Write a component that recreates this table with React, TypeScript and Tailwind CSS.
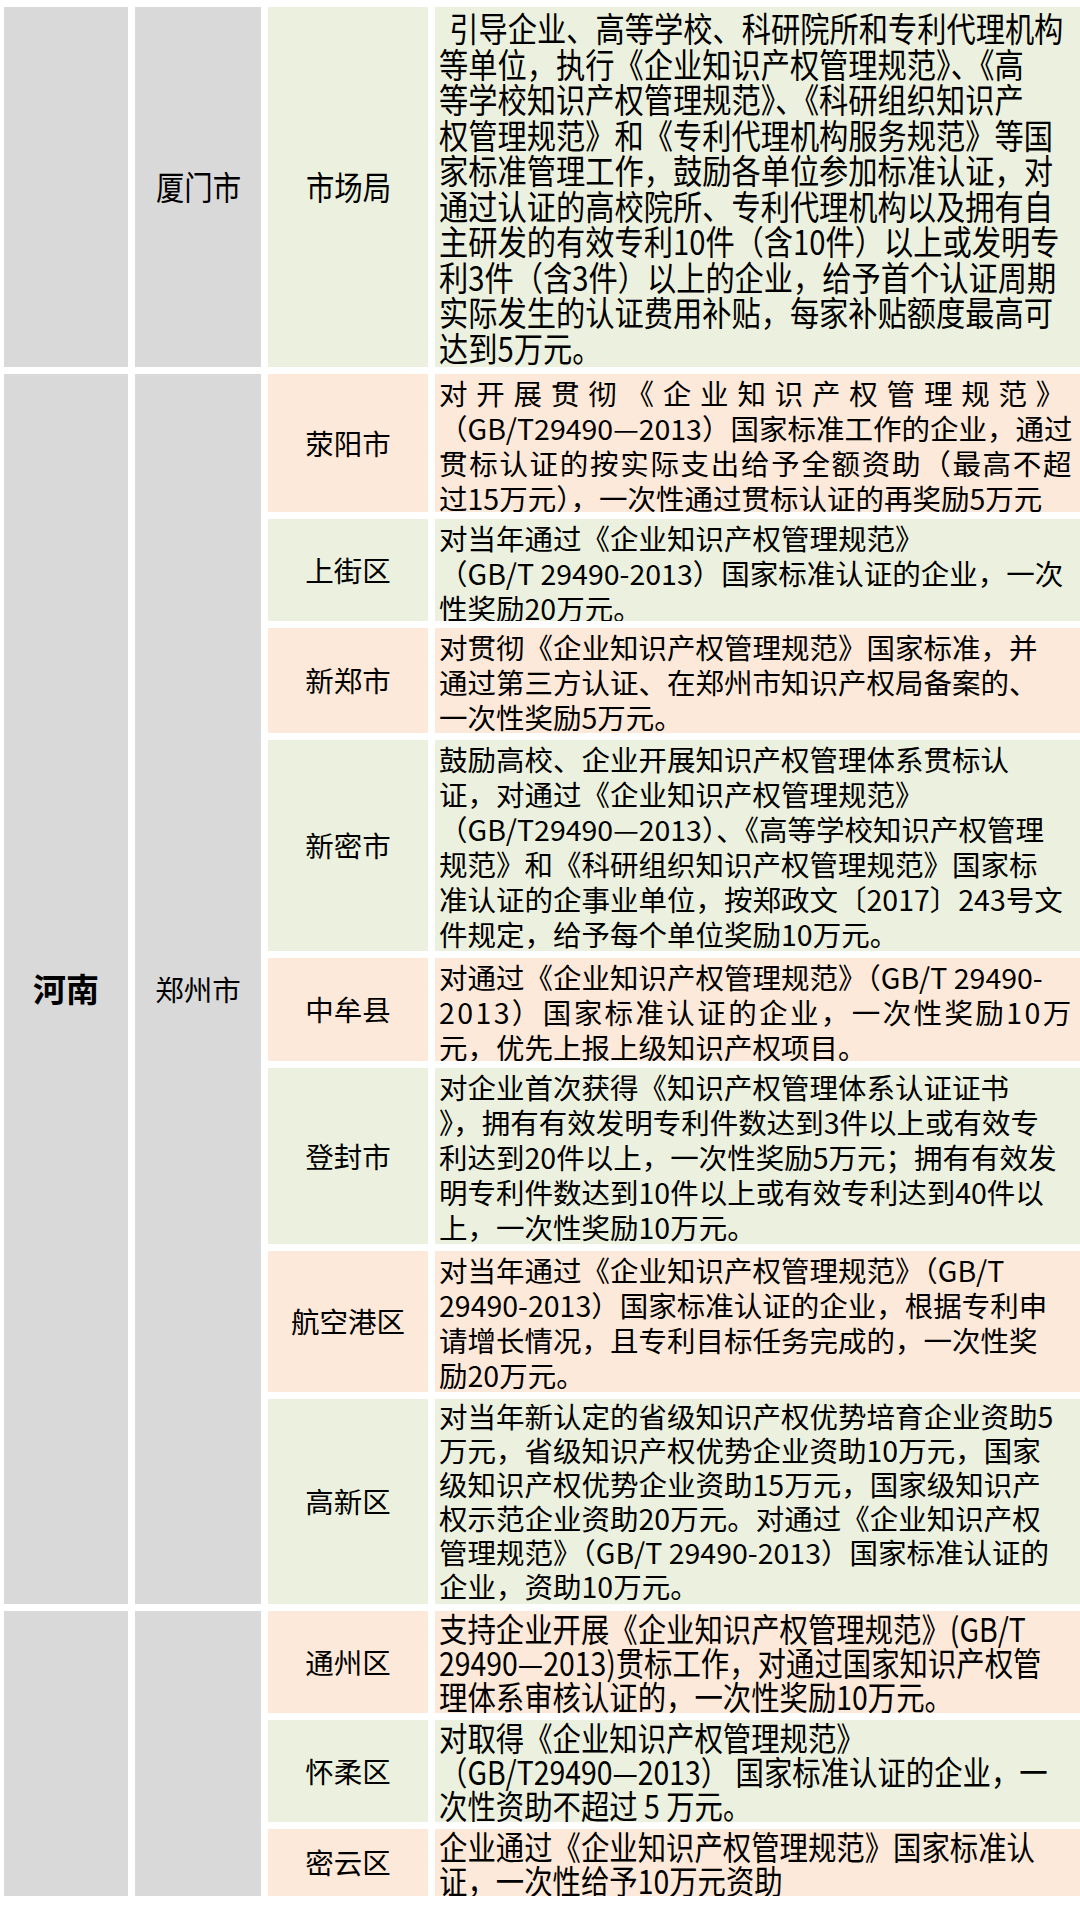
type Line = string | { t: string; c: string };

type Row = {
  label: string;
  bg: "green" | "peach";
  lines: Line[];
  narrow?: boolean;
  tight?: boolean;
};

const henan: Row[] = [
  {
    label: "荥阳市",
    bg: "peach",
    lines: [
      { t: "对开展贯彻《企业知识产权管理规范》", c: "tracking-[8.8px]" },
      "（GB/T29490—2013）国家标准工作的企业，通过",
      { t: "贯标认证的按实际支出给予全额资助（最高不超", c: "tracking-[1.7px]" },
      "过15万元），一次性通过贯标认证的再奖励5万元",
    ],
  },
  {
    label: "上街区",
    bg: "green",
    lines: [
      "对当年通过《企业知识产权管理规范》",
      "（GB/T 29490-2013）国家标准认证的企业，一次",
      "性奖励20万元。",
    ],
  },
  {
    label: "新郑市",
    bg: "peach",
    lines: [
      "对贯彻《企业知识产权管理规范》国家标准，并",
      "通过第三方认证、在郑州市知识产权局备案的、",
      "一次性奖励5万元。",
    ],
  },
  {
    label: "新密市",
    bg: "green",
    lines: [
      "鼓励高校、企业开展知识产权管理体系贯标认",
      "证，对通过《企业知识产权管理规范》",
      "（GB/T29490—2013）、《高等学校知识产权管理",
      "规范》和《科研组织知识产权管理规范》国家标",
      "准认证的企事业单位，按郑政文〔2017〕243号文",
      "件规定，给予每个单位奖励10万元。",
    ],
  },
  {
    label: "中牟县",
    bg: "peach",
    lines: [
      "对通过《企业知识产权管理规范》（GB/T 29490-",
      { t: "2013）国家标准认证的企业，一次性奖励10万", c: "tracking-[2.4px]" },
      "元，优先上报上级知识产权项目。",
    ],
  },
  {
    label: "登封市",
    bg: "green",
    lines: [
      "对企业首次获得《知识产权管理体系认证证书",
      "》，拥有有效发明专利件数达到3件以上或有效专",
      "利达到20件以上，一次性奖励5万元；拥有有效发",
      "明专利件数达到10件以上或有效专利达到40件以",
      "上，一次性奖励10万元。",
    ],
  },
  {
    label: "航空港区",
    bg: "peach",
    lines: [
      "对当年通过《企业知识产权管理规范》（GB/T",
      "29490-2013）国家标准认证的企业，根据专利申",
      "请增长情况，且专利目标任务完成的，一次性奖",
      "励20万元。",
    ],
  },
  {
    label: "高新区",
    bg: "green",
    tight: true,
    lines: [
      "对当年新认定的省级知识产权优势培育企业资助5",
      "万元，省级知识产权优势企业资助10万元，国家",
      "级知识产权优势企业资助15万元，国家级知识产",
      "权示范企业资助20万元。对通过《企业知识产权",
      "管理规范》（GB/T 29490-2013）国家标准认证的",
      "企业，资助10万元。",
    ],
  },
];

const beijing: Row[] = [
  {
    label: "通州区",
    bg: "peach",
    narrow: true,
    lines: [
      "支持企业开展《企业知识产权管理规范》(GB/T",
      "29490—2013)贯标工作，对通过国家知识产权管",
      "理体系审核认证的，一次性奖励10万元。",
    ],
  },
  {
    label: "怀柔区",
    bg: "green",
    narrow: true,
    lines: [
      "对取得《企业知识产权管理规范》",
      "（GB/T29490—2013） 国家标准认证的企业，一",
      "次性资助不超过 5 万元。",
    ],
  },
  {
    label: "密云区",
    bg: "peach",
    narrow: true,
    lines: ["企业通过《企业知识产权管理规范》国家标准认", "证，一次性给予10万元资助"],
  },
];

function Lines({ lines }: { lines: Line[] }) {
  return (
    <>
      {lines.map((l, i) =>
        typeof l === "string" ? (
          <div key={i} className="whitespace-nowrap">
            {l}
          </div>
        ) : (
          <div key={i} className={`whitespace-nowrap ${l.c}`}>
            {l.t}
          </div>
        )
      )}
    </>
  );
}

function Label({ row }: { row: Row }) {
  return (
    <div
      className={`col-start-3 flex items-center justify-center text-[28.5px] text-black ${
        row.bg === "green" ? "bg-[#ebf1de]" : "bg-[#fde9d9]"
      }`}
    >
      {row.label}
    </div>
  );
}

function Body({ row }: { row: Row }) {
  const bg = row.bg === "green" ? "bg-[#ebf1de]" : "bg-[#fde9d9]";
  if (row.narrow) {
    return (
      <div className={`col-start-4 overflow-hidden pl-[4px] ${bg}`}>
        <div className="origin-top-left scale-x-[0.86] text-[33px] leading-[34px] text-black">
          <Lines lines={row.lines} />
        </div>
      </div>
    );
  }
  return (
    <div
      className={`col-start-4 overflow-hidden pl-[4px] text-[28.5px] text-black ${
        row.tight ? "leading-[34px]" : "pt-[1px] leading-[35px]"
      } ${bg}`}
    >
      <Lines lines={row.lines} />
    </div>
  );
}

function TableRow({ row }: { row: Row }) {
  return (
    <>
      <Label row={row} />
      <Body row={row} />
    </>
  );
}

export default function App() {
  return (
    <div className="h-[1907px] w-[1080px] overflow-hidden bg-white pl-[4px] pt-[7px] font-['Noto_Sans_CJK_SC',sans-serif]">
      <div className="grid grid-cols-[124px_126px_160px_645px] grid-rows-[360px_138px_102px_105px_211px_103px_176px_141px_205px_102px_102px_67px] gap-x-[7px] gap-y-[7px]">
        {/* 厦门 */}
        <div className="col-start-1 bg-[#d9d9d9]" />
        <div className="col-start-2 flex items-center justify-center bg-[#d9d9d9]">
          <span className="scale-x-[0.86] text-[33px] text-black">厦门市</span>
        </div>
        <div className="col-start-3 flex items-center justify-center bg-[#ebf1de]">
          <span className="scale-x-[0.86] text-[33px] text-black">市场局</span>
        </div>
        <div className="col-start-4 overflow-hidden bg-[#ebf1de] pl-[4px] pt-[3px]">
          <div className="origin-top-left scale-x-[0.86] text-[34px] leading-[35.5px] text-black">
            <Lines
              lines={[
                { t: "引导企业、高等学校、科研院所和专利代理机构", c: "pl-[12px]" },
                "等单位，执行《企业知识产权管理规范》、《高",
                "等学校知识产权管理规范》、《科研组织知识产",
                "权管理规范》和《专利代理机构服务规范》等国",
                "家标准管理工作，鼓励各单位参加标准认证，对",
                "通过认证的高校院所、专利代理机构以及拥有自",
                "主研发的有效专利10件（含10件）以上或发明专",
                "利3件（含3件）以上的企业，给予首个认证周期",
                "实际发生的认证费用补贴，每家补贴额度最高可",
                "达到5万元。",
              ]}
            />
          </div>
        </div>

        {/* 河南 */}
        <div className="col-start-1 row-span-8 flex items-center justify-center bg-[#d9d9d9] text-[33px] font-bold text-black">
          河南
        </div>
        <div className="col-start-2 row-span-8 flex items-center justify-center bg-[#d9d9d9] text-[28.5px] text-black">
          郑州市
        </div>
        {henan.map((row) => (
          <TableRow key={row.label} row={row} />
        ))}

        {/* 北京 */}
        <div className="col-start-1 row-span-3 bg-[#d9d9d9]" />
        <div className="col-start-2 row-span-3 bg-[#d9d9d9]" />
        {beijing.map((row) => (
          <TableRow key={row.label} row={row} />
        ))}
      </div>
    </div>
  );
}
